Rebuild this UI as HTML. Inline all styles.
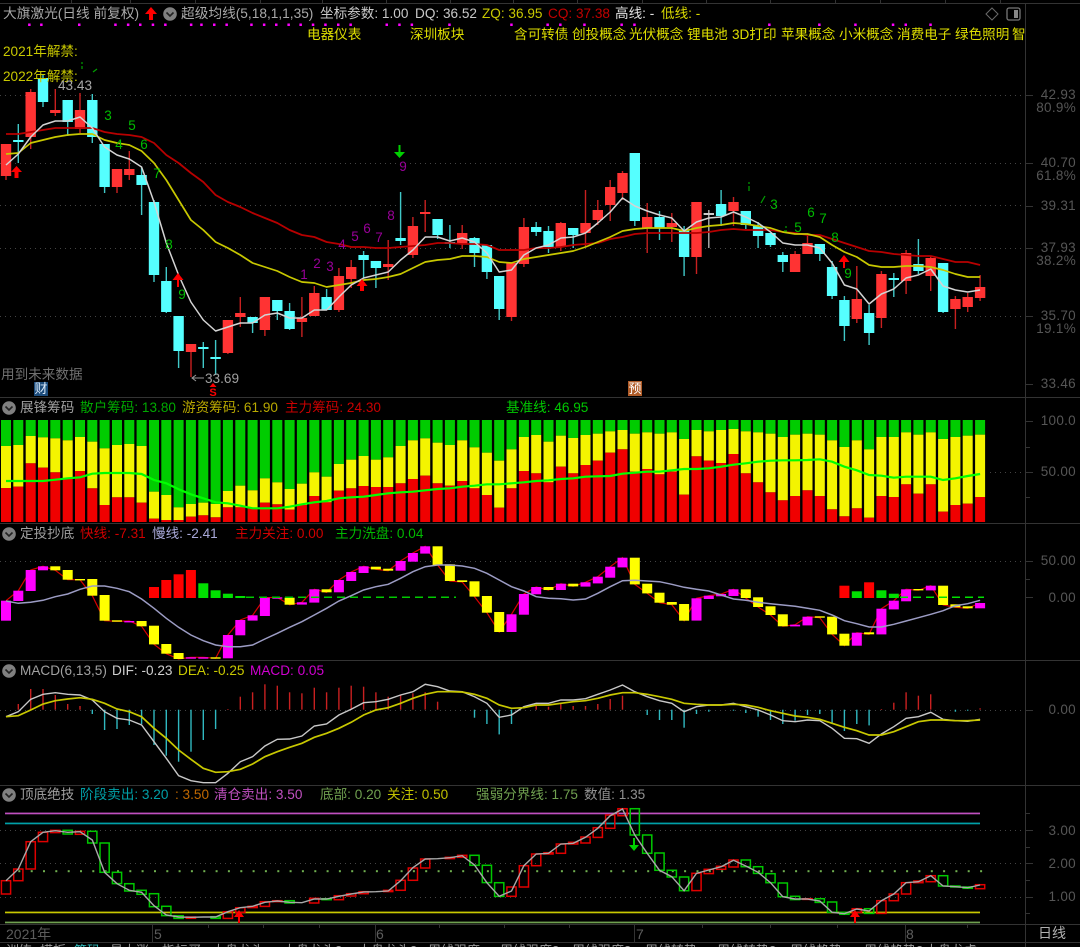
<!DOCTYPE html>
<html lang="zh">
<head>
<meta charset="utf-8">
<title>大旗激光</title>
<style>
html,body{margin:0;padding:0;background:#000;}
#r{position:relative;width:1080px;height:947px;background:#000;overflow:hidden;font-family:"Liberation Sans","Noto Sans CJK SC",sans-serif;font-size:13.6px;line-height:16px;color:#aaa;filter:blur(.3px);}
#r svg{position:absolute;left:0;top:0;}
.t{position:absolute;white-space:nowrap;}
.a{position:absolute;right:4px;white-space:nowrap;color:#565656;font-size:13.5px;letter-spacing:.3px;}
.y{color:#dede00;}
.tab{position:absolute;top:943px;height:4px;overflow:hidden;color:#9a9a9a;font-size:13px;line-height:15px;white-space:nowrap;}
.tab span{position:relative;top:0;display:block;}
</style>
</head>
<body>
<div id="r">
<svg width="1080" height="947" viewBox="0 0 1080 947" xmlns="http://www.w3.org/2000/svg">
  <!-- frame -->
  <g stroke="#333" stroke-width="1" fill="none" shape-rendering="crispEdges">
    <path d="M0 3.5H1080M0 397.5H1080M0 523.5H1080M0 660.5H1080M0 785.5H1080M0 924.5H1080M0 942.5H1080M1025.5 3V947"/>
    <path d="M1025 95.5h8M1025 163.5h8M1025 206.5h8M1025 248.5h8M1025 316.5h8M1025 384.5h8M1025 421.5h8M1025 447.5h5M1025 472.5h8M1025 497.5h5M1025 561.5h8M1025 579.5h5M1025 597.5h8M1025 710.5h8M1025 813.5h5M1025 830.5h8M1025 847.5h5M1025 863.5h8M1025 880.5h5M1025 897.5h8M1025 913.5h5"/>
    <path d="M152.5 924V942M375.5 924V942M634.5 924V942M905.5 924V942M208.5 924v4M263.5 924v4M319.5 924v4M439.5 924v4M504.5 924v4M569.5 924v4M702.5 924v4M770.5 924v4M837.5 924v4M967.5 924v4M71.5 0v3M130.5 0v3M195.5 0v3M260.5 0v3M322.5 0v3M386.5 0v3M450.5 0v3M513.5 0v3M577.5 0v3M642.5 0v3M706.5 0v3M770.5 0v3M835.5 0v3M880.5 0v3M945.5 0v3M1000.5 0v3"/>
  </g>
  <!-- dotted grids -->
  <g stroke="#444" stroke-width="1" stroke-dasharray="1 4" fill="none" shape-rendering="crispEdges">
    <path d="M0 95.5H1022M0 163.5H1022M0 205.5H1022M0 248.5H1022M0 316.5H1022"/>
    <path d="M990 472.5H1022M0 561.5H1022M0 710.5H1022M0 830.5H1022M0 863.5H1022M0 897.5H1022"/>
  </g>
  <g id="mag" fill="#f0f"></g>
  <g id="candles"></g>
  <g id="mas" fill="none" stroke-linejoin="round"></g>
  <g id="chips"></g>
  <g id="p3"></g>
  <g id="p4"></g>
  <g id="p5"></g>

  <!-- numbers on main chart -->
  <g font-family="Liberation Sans, sans-serif" font-size="13.5" fill="#00bb00" text-anchor="middle">
    <text x="108" y="120">3</text><text x="132" y="130">5</text><text x="119" y="149">4</text><text x="144" y="149">6</text><text x="157" y="178">7</text><text x="169" y="249">8</text><text x="182" y="299">9</text>
    <text x="774" y="209">3</text><text x="798" y="232">5</text><text x="811" y="217">6</text><text x="823" y="223">7</text><text x="835" y="242">8</text><text x="848" y="278">9</text>
  </g>
  <g stroke="#00a000" stroke-width="1.2" fill="none">
    <path d="M82 62v2M82 66v3M93 72l4-3M749 182v2M749 186v5M761 203l4-7M786 226v2M784 231h3"/>
  </g>
  <g font-family="Liberation Sans, sans-serif" font-size="13.5" fill="#980098" text-anchor="middle">
    <text x="304" y="279">1</text><text x="317" y="268">2</text><text x="330" y="271">3</text><text x="342" y="249">4</text><text x="355" y="241">5</text><text x="367" y="233">6</text><text x="379" y="242">7</text><text x="391" y="220">8</text><text x="403" y="171">9</text>
  </g>

  <!-- arrows -->
  <g fill="#f00">
    <path transform="translate(16.5,171)" d="M-5.5 1L0-5 5.5 1H2V7H-2V1Z"/>
    <path transform="translate(178,279)" d="M-5.5 1L0-6 5.5 1H1V8H-1V1Z"/>
    <path transform="translate(362,285)" d="M-5.5 1L0-6 5.5 1H2V6H-2V1Z"/>
    <path transform="translate(844,261)" d="M-5.5 1L0-6 5.5 1H1V7H-1V1Z"/>
    <path transform="translate(151,13)" d="M-6 1L0-6 6 1H2V7H-2V1Z"/>
    <path transform="translate(213,386)" d="M-3.5 1L0-3 3.5 1Z"/>
    <path transform="translate(239,916)" d="M-5 1L0-6 5 1H1V7H-1V1Z"/>
    <path transform="translate(855,916)" d="M-5 1L0-6 5 1H1V7H-1V1Z"/>
  </g>
  <g fill="#00d000">
    <path transform="translate(399.5,152)" d="M-5.5 0L0 6 5.5 0H1V-7H-1V0Z"/>
    <path transform="translate(634,845)" d="M-5 0L0 6 5 0H1V-7H-1V0Z"/>
  </g>
  <text x="213" y="396" font-family="Liberation Sans, sans-serif" font-size="11" font-weight="bold" fill="#f00" text-anchor="middle">S</text>
  <path d="M204 378H192M196 375l-4 3 4 3" stroke="#999" fill="none"/>

  <!-- header icons -->
  <g fill="#808080">
    <circle cx="170" cy="14" r="6.8"/><circle cx="9" cy="408" r="6.8"/><circle cx="9" cy="534" r="6.8"/><circle cx="9" cy="671" r="6.8"/><circle cx="9" cy="795" r="6.8"/>
  </g>
  <g stroke="#222" stroke-width="1.6" fill="none">
    <path d="M166.5 12.5l3.5 3.5 3.5-3.5M5.5 406.5l3.5 3.5 3.5-3.5M5.5 532.5l3.5 3.5 3.5-3.5M5.5 669.5l3.5 3.5 3.5-3.5M5.5 793.5l3.5 3.5 3.5-3.5"/>
  </g>
  <path d="M992 8l6 6-6 6-6-6Z" stroke="#6a6a6a" fill="none"/>
  <rect x="1007" y="8" width="13" height="12" rx="2" stroke="#777" fill="none" stroke-width="1.3"/>
  <rect x="1014" y="10" width="4" height="8" fill="#888"/>
</svg>

<!-- top row -->
<div class="t" style="left:3px;top:6px;color:#a8a8a8;font-size:13.7px">大旗激光(日线 前复权)</div>
<div class="t" style="left:181px;top:6px;color:#a8a8a8;font-size:13.7px">超级均线(5,18,1,1,35)</div>
<div class="t" style="left:320px;top:6px;color:#c8c8c8">坐标参数: 1.00</div>
<div class="t" style="left:415px;top:6px;color:#c8c8c8">DQ: 36.52</div>
<div class="t" style="left:482px;top:6px;color:#c8c800">ZQ: 36.95</div>
<div class="t" style="left:548px;top:6px;color:#c00000">CQ: 37.38</div>
<div class="t" style="left:615px;top:6px;color:#e0e0e0">高线: -</div>
<div class="t" style="left:661px;top:6px;color:#d8d800">低线: -</div>

<!-- concept row -->
<div class="t y" style="left:307px;top:27px">电器仪表</div>
<div class="t y" style="left:410px;top:27px">深圳板块</div>
<div class="t y" style="left:514px;top:27px">含可转债</div>
<div class="t y" style="left:572px;top:27px">创投概念</div>
<div class="t y" style="left:629px;top:27px">光伏概念</div>
<div class="t y" style="left:687px;top:27px">锂电池</div>
<div class="t y" style="left:732px;top:27px">3D打印</div>
<div class="t y" style="left:781px;top:27px">苹果概念</div>
<div class="t y" style="left:839px;top:27px">小米概念</div>
<div class="t y" style="left:897px;top:27px">消费电子</div>
<div class="t y" style="left:955px;top:27px">绿色照明</div>
<div class="t y" style="left:1012px;top:27px;width:13px;overflow:hidden">智</div>

<div class="t" style="left:3px;top:44px;color:#c8c800">2021年解禁:</div>
<div class="t" style="left:3px;top:69px;color:#c8c800">2022年解禁:</div>
<div class="t" style="left:58px;top:78px;color:#a8a8a8">43.43</div>
<div class="t" style="left:205px;top:371px;color:#a0a0a0">33.69</div>
<div class="t" style="left:1px;top:367px;color:#707070">用到未来数据</div>
<div class="t" style="left:34px;top:382px;width:14px;height:14px;line-height:14px;background:#1c4c7c;color:#d8e8f8;text-align:center;font-size:13px">财</div>
<div class="t" style="left:628px;top:381px;width:14px;height:15px;line-height:15px;background:#b05c28;color:#fff;text-align:center;font-size:13px">预</div>

<!-- panel 2 header -->
<div class="t" style="left:20px;top:400px;color:#a0a0a0">展锋筹码</div>
<div class="t" style="left:80px;top:400px;color:#00a800">散户筹码: 13.80</div>
<div class="t" style="left:182px;top:400px;color:#b8a800">游资筹码: 61.90</div>
<div class="t" style="left:285px;top:400px;color:#c80000">主力筹码: 24.30</div>
<div class="t" style="left:506px;top:400px;color:#00c800">基准线: 46.95</div>

<!-- panel 3 header -->
<div class="t" style="left:20px;top:526px;color:#a0a0a0">定投抄底</div>
<div class="t" style="left:80px;top:526px;color:#d00000">快线: -7.31</div>
<div class="t" style="left:152px;top:526px;color:#a8a8d8">慢线: -2.41</div>
<div class="t" style="left:235px;top:526px;color:#d00000">主力关注: 0.00</div>
<div class="t" style="left:335px;top:526px;color:#00b800">主力洗盘: 0.04</div>

<!-- panel 4 header -->
<div class="t" style="left:20px;top:663px;color:#a0a0a0">MACD(6,13,5)</div>
<div class="t" style="left:112px;top:663px;color:#d0d0d0">DIF: -0.23</div>
<div class="t" style="left:178px;top:663px;color:#c8c800">DEA: -0.25</div>
<div class="t" style="left:250px;top:663px;color:#d000d0">MACD: 0.05</div>

<!-- panel 5 header -->
<div class="t" style="left:20px;top:787px;color:#a0a0a0">顶底绝技</div>
<div class="t" style="left:80px;top:787px;color:#00a0a8">阶段卖出: 3.20</div>
<div class="t" style="left:175px;top:787px;color:#c06800">: 3.50</div>
<div class="t" style="left:214px;top:787px;color:#c050c0">清仓卖出: 3.50</div>
<div class="t" style="left:320px;top:787px;color:#70a050">底部: 0.20</div>
<div class="t" style="left:387px;top:787px;color:#c0c000">关注: 0.50</div>
<div class="t" style="left:476px;top:787px;color:#70a050">强弱分界线: 1.75</div>
<div class="t" style="left:584px;top:787px;color:#909090">数值: 1.35</div>

<!-- axis labels -->
<div class="a" style="top:87px">42.93</div>
<div class="a" style="top:100px">80.9%</div>
<div class="a" style="top:155px">40.70</div>
<div class="a" style="top:168px">61.8%</div>
<div class="a" style="top:198px">39.31</div>
<div class="a" style="top:240px">37.93</div>
<div class="a" style="top:253px">38.2%</div>
<div class="a" style="top:308px">35.70</div>
<div class="a" style="top:321px">19.1%</div>
<div class="a" style="top:376px">33.46</div>
<div class="a" style="top:413px">100.0</div>
<div class="a" style="top:464px">50.00</div>
<div class="a" style="top:553px">50.00</div>
<div class="a" style="top:590px">0.00</div>
<div class="a" style="top:702px">0.00</div>
<div class="a" style="top:823px">3.00</div>
<div class="a" style="top:856px">2.00</div>
<div class="a" style="top:889px">1.00</div>

<!-- date axis -->
<div class="t" style="left:6px;top:926px;color:#5c5c5c;font-size:14px">2021年</div>
<div class="t" style="left:154px;top:926px;color:#5c5c5c;font-size:14px">5</div>
<div class="t" style="left:376px;top:926px;color:#5c5c5c;font-size:14px">6</div>
<div class="t" style="left:636px;top:926px;color:#5c5c5c;font-size:14px">7</div>
<div class="t" style="left:906px;top:926px;color:#5c5c5c;font-size:14px">8</div>
<div class="t" style="left:1038px;top:925px;color:#b0b0b0;font-size:14px">日线</div>

<!-- clipped tab strip -->
<div class="tab" style="left:6px"><span>训练</span></div>
<div class="tab" style="left:40px"><span>模板</span></div>
<div class="tab" style="left:74px;color:#30c0c0"><span>筹码</span></div>
<div class="tab" style="left:110px"><span>最大涨</span></div>
<div class="tab" style="left:162px"><span>指标买</span></div>
<div class="tab" style="left:212px"><span>大盘龙头</span></div>
<div class="tab" style="left:283px"><span>大盘龙头2</span></div>
<div class="tab" style="left:358px"><span>大盘龙头3</span></div>
<div class="tab" style="left:428px"><span>周线强度</span></div>
<div class="tab" style="left:500px"><span>周线强度2</span></div>
<div class="tab" style="left:572px"><span>周线强度3</span></div>
<div class="tab" style="left:645px"><span>周线转势</span></div>
<div class="tab" style="left:717px"><span>周线转势2</span></div>
<div class="tab" style="left:790px"><span>周线趋势</span></div>
<div class="tab" style="left:864px"><span>周线趋势2</span></div>
<div class="tab" style="left:925px"><span>大盘龙虎</span></div>

<script>
(function(){
var NS="http://www.w3.org/2000/svg";
function X(i){return 6+12.33*i;}
function el(par,tag,attrs){var e=document.createElementNS(NS,tag);for(var k in attrs)e.setAttribute(k,attrs[k]);par.appendChild(e);return e;}
function $(id){return document.getElementById(id);}
function pts(arr,off,div){return arr.map(function(v,i){return X(i).toFixed(1)+","+(off+v/(div||1)).toFixed(1);}).join(" ");}

/* magenta dots */
[85,120,230,335,372,407,444,480,555,585,622,658,730,767,802,838,873,909,945,982,1018,1123,1160,1196,1305,1485].forEach(function(z){el($("mag"),"rect",{x:(z/2.904-1.2).toFixed(1),y:23.5,width:2.5,height:2.5});});
[22,59,129,237,274,666,811,916,1025,1062,1134].forEach(function(z){el($("mag"),"rect",{x:(540+z/2.904-1.2).toFixed(1),y:23.5,width:2.5,height:2.5});});

/* candles: type, top, bottom, wickTop, wickBottom */
var C=[
"r",144,176,144,180,"c",140,142,124,163,"r",92,137,89,149,"c",78,102,75,107,"r",110,113,89,116,
"c",100,122,100,136,"r",110,129,93,133,"c",100,137,94,143,"c",144,187,144,193,"r",169,187,169,193,
"r",169,175,151,180,"c",175,185,167,215,"c",202,275,200,282,"c",281,312,267,313,"c",316,351,316,368,
"r",344,352,344,377,"c",347,349,342,368,"c",357,359,340,375,"r",320,353,320,354,"r",313,317,297,327,
"c",317,323,317,333,"r",297,330,297,336,"c",300,311,300,320,"c",311,329,303,330,"r",318,322,297,337,
"r",293,316,286,316,"c",297,310,289,310,"r",276,310,268,312,"r",267,279,260,288,"c",255,260,251,278,
"c",261,268,261,288,"r",264,267,240,280,"c",238,241,192,245,"r",226,255,217,258,"r",212,214,200,232,
"c",219,235,219,239,"c",242,244,225,248,"r",233,244,225,249,"c",238,253,237,267,"c",245,272,245,279,
"c",276,309,276,320,"r",263,317,263,321,"r",227,264,218,267,"c",227,232,222,236,"c",231,247,226,253,
"r",223,247,222,251,"c",228,235,228,248,"r",223,233,190,247,"r",210,220,200,225,"r",187,205,180,221,
"r",173,193,171,200,"c",153,221,153,226,"r",217,228,203,253,"c",217,228,211,240,"r",223,227,213,242,
"c",230,257,226,276,"r",202,257,202,274,"g",213,215,210,248,"c",204,216,190,226,"r",202,211,197,226,
"c",211,225,211,229,"c",226,236,222,248,"c",233,245,233,247,"c",255,262,252,272,"r",254,272,251,272,
"r",243,254,234,254,"c",244,254,244,261,"c",267,296,261,299,"c",300,326,296,341,"r",299,319,266,323,
"c",313,333,305,345,"r",274,318,271,328,"c",278,280,273,297,"r",253,281,250,294,"c",264,271,239,274,
"r",258,276,256,291,"c",263,312,263,313,"r",299,309,296,329,"r",297,307,293,312,"r",287,298,275,301
];
var g=$("candles");
for(var n=0;n<80;n++){
  var j=n*5,t=C[j],x=X(n);
  var body={r:"#ff3333",c:"#55ffff",g:"#cccccc"}[t],wick={r:"#c82020",c:"#40c8c8",g:"#b0b0b0"}[t];
  el(g,"rect",{x:(x-.7).toFixed(1),y:C[j+3],width:1.4,height:C[j+4]-C[j+3],fill:wick});
  el(g,"rect",{x:(x-5.2).toFixed(1),y:C[j+1],width:10.4,height:Math.max(C[j+2]-C[j+1],2),fill:body});
}

/* moving averages */
var m5=[165,154,137,125,121,121,117,128,147,155,159,167,202,243,275,302,320,331,327,323,323,315,313,318,318,310,310,297,285,278,275,272,260,250,237,237,241,238,242,253,272,270,255,248,245,238,237,233,223,212,198,206,211,215,218,231,222,218,217,212,217,223,232,243,245,245,248,263,285,289,304,294,289,278,275,269,286,290,292,290];
var m18=[154,153,143,140,137,135,134,134,140,143,145,151,163,180,200,220,230,242,248,255,263,267,271,277,282,283,287,285,283,280,279,277,274,268,262,260,259,256,256,257,262,263,259,257,255,253,251,247,242,237,231,229,228,228,228,231,228,226,225,223,224,226,228,232,234,234,237,245,252,257,265,267,267,266,266,267,270,274,277,277];
var m35=[134,134,132,130,128,128,128,128,132,134,135,137,143,155,163,173,182,195,202,207,213,218,223,230,235,237,242,244,247,247,248,248,247,246,245,243,243,244,244,245,250,250,250,248,248,247,245,244,243,239,237,234,233,233,233,233,233,232,230,229,230,230,230,232,233,235,235,239,243,247,251,252,254,255,256,256,259,262,262,265];
var M=$("mas");
el(M,"polyline",{points:pts(m35,0),stroke:"#b80000","stroke-width":1.8});
el(M,"polyline",{points:pts(m18,0),stroke:"#c8c800","stroke-width":1.7});
el(M,"polyline",{points:pts(m5,0),stroke:"#d4d4d4","stroke-width":1.5});

/* chips panel */
var cg=[153,150,123,127,130,136,126,140,160,150,147,153,290,300,337,327,323,327,288,272,286,250,262,282,266,232,245,207,194,183,194,187,153,136,130,143,150,136,157,173,197,163,126,120,140,122,129,120,116,109,105,116,112,116,112,132,105,109,105,102,109,112,116,126,119,116,119,136,156,136,163,126,126,112,119,112,132,126,122,119];
var cy=[279,275,205,218,232,252,228,280,330,307,307,323,371,375,375,365,361,367,337,337,341,323,328,344,330,303,322,287,280,273,276,276,265,252,242,265,272,258,280,300,338,280,228,235,262,215,235,210,197,173,163,230,222,238,230,299,184,197,204,177,235,262,292,316,303,286,303,343,364,340,368,303,306,268,296,268,350,330,326,306];
var cl=[258,258,258,258,254,250,247,236,234,234,234,237,255,265,283,298,310,322,325,332,340,340,340,335,328,322,318,310,307,305,300,295,292,290,286,282,280,275,272,268,268,265,262,258,256,252,250,245,244,243,236,233,230,230,226,222,222,220,215,209,205,200,197,196,196,195,193,200,215,226,240,242,248,245,245,245,255,250,243,237];
var P=$("chips");
for(var i=0;i<80;i++){
  var x0=(X(i)-5).toFixed(1),a=395+cg[i]/3,b=395+cy[i]/3;
  el(P,"rect",{x:x0,y:420,width:10,height:a-420,fill:"#00cc00"});
  el(P,"rect",{x:x0,y:a,width:10,height:b-a,fill:"#f4f400"});
  el(P,"rect",{x:x0,y:b,width:10,height:522-b,fill:"#f00000"});
}
el(P,"polyline",{points:pts(cl,395,3),fill:"none",stroke:"#00ff00","stroke-width":2.2});

/* panel 3 */
var B3=["m",227,287,"m",197,228,"m",135,198,"m",124,136,"y",124,136,"y",135,164,"y",162,164,"y",162,212,"y",210,287,"y",286,289,
"m",288,290,"y",288,304,"y",302,358,"y",357,386,"y",384,402,"m",397,401,"m",397,400,"y",397,400,"m",330,400,"m",285,331,
"m",271,287,"m",218,273,"m",217,220,"y",218,239,"m",232,239,"m",193,233,"y",193,202,"m",165,202,"m",141,168,"m",124,144,
"y",125,133,"y",131,137,"m",108,137,"m",84,110,"m",64,86,"y",64,120,"y",118,168,"y",166,171,"y",169,215,"y",213,263,
"y",261,321,"m",268,321,"m",207,269,"m",186,208,"y",186,195,"m",176,195,"y",176,184,"m",172,185,"m",155,175,"m",125,158,
"m",98,127,"y",98,178,"y",176,205,"y",203,233,"y",231,239,"y",237,287,"m",220,287,"m",212,222,"m",207,214,"m",193,213,
"y",193,219,"y",217,246,"y",244,270,"y",268,304,"m",299,304,"m",275,301,"y",274,278,"y",275,328,"y",326,362,"m",323,362,
"y",322,328,"m",251,328,"m",227,253,"m",193,229,"y",192,196,"m",182,196,"y",182,240,"y",238,247,"y",244,250,"m",234,250];
var S=$("p3"),zig=[];
for(var i=0;i<80;i++){
  var t=B3[i*3],a=B3[i*3+1],b=B3[i*3+2];
  zig.push(X(i).toFixed(1)+","+(525+(t=="m"?a:b)/3).toFixed(1));
}
el(S,"polyline",{points:zig.join(" "),fill:"none",stroke:"#d80000","stroke-width":1.2});
for(var i=0;i<80;i++){
  var t=B3[i*3],a=525+B3[i*3+1]/3,b=525+B3[i*3+2]/3;
  el(S,"rect",{x:(X(i)-5).toFixed(1),y:a.toFixed(1),width:10,height:Math.max(b-a,1.4).toFixed(1),fill:t=="m"?"#ff00ff":"#ffff00"});
}
[[12,186,"#f00"],[13,165,"#f00"],[14,148,"#f00"],[15,135,"#f00"],[16,175,"#00e000"],[17,196,"#00e000"],[18,206,"#00e000"],[19,213,"#00e000"],[68,182,"#f00"],[69,199,"#00e000"],[70,172,"#f00"],[71,196,"#00e000"],[72,206,"#00e000"]].forEach(function(h){
  var top=525+h[1]/3;
  el(S,"rect",{x:(X(h[0])-5).toFixed(1),y:top.toFixed(1),width:10,height:(598-top).toFixed(1),fill:h[2]});
});
el(S,"path",{d:"M246 597.3H456",stroke:"#00c800","stroke-width":1.5,"stroke-dasharray":"8 5",fill:"none"});
el(S,"path",{d:"M900 597.3H984",stroke:"#00e000","stroke-width":1.5,"stroke-dasharray":"8 5",fill:"none"});
var slow=[228,235,232,226,215,207,193,183,183,190,200,222,250,280,307,330,347,360,365,365,360,342,325,307,290,270,250,228,212,195,185,178,160,140,125,120,120,123,130,145,165,185,198,215,220,221,225,222,205,185,167,166,168,170,178,187,193,198,210,222,226,232,236,240,244,250,256,270,287,296,306,306,298,288,278,268,257,242,236,226];
el(S,"polyline",{points:pts(slow,525,3),fill:"none",stroke:"#9c9cc4","stroke-width":1.5});

/* MACD */
var H={1:132,2:87,3:87,4:105,5:132,6:138,7:162,8:210,9:207,10:195,11:192,12:255,13:287,14:305,15:275,16:240,17:207,18:147,19:110,20:97,21:73,22:77,23:97,24:100,25:83,26:97,27:83,28:77,29:80,30:97,31:110,32:105,33:100,34:97,35:125,38:173,39:192,40:223,41:192,43:137,44:140,45:130,46:138,47:138,48:132,49:117,50:107,52:165,53:180,54:180,55:203,56:162,57:155,59:152,60:159,61:170,62:180,63:192,64:182,65:165,66:162,67:190,68:213,69:192,70:196,71:147,72:128,73:97,74:107,75:103,77:155,78:152,79:145};
var Q=$("p4");
Object.keys(H).forEach(function(k){
  var z=H[k],up=z<149,y1=660+Math.min(z,149)/3,y2=660+Math.max(z,149)/3;
  el(Q,"rect",{x:(X(+k)-.7).toFixed(1),y:y1.toFixed(1),width:1.4,height:(y2-y1).toFixed(1),fill:up?"#c82020":"#30b8c0"});
});
var dif=[170,155,118,103,98,103,105,120,155,175,180,195,245,295,347,362,368,368,340,305,290,258,238,237,228,198,192,165,148,128,125,118,105,95,73,80,93,95,110,130,172,165,140,130,130,120,120,116,103,90,75,95,110,122,130,155,140,135,135,130,140,150,165,182,185,180,182,205,235,236,250,222,200,175,170,157,178,182,184,178];
var dea=[170,167,150,132,122,117,113,118,130,147,155,170,205,235,270,298,325,337,335,328,312,290,275,262,250,232,220,205,187,165,150,143,130,115,103,95,95,96,103,115,135,145,143,135,135,130,125,122,115,105,98,98,103,110,118,130,133,135,135,133,135,142,152,160,168,172,178,190,202,212,225,225,215,200,185,180,180,182,182,180];
el(Q,"polyline",{points:pts(dif,660,3),fill:"none",stroke:"#c8c8c8","stroke-width":1.4});
el(Q,"polyline",{points:pts(dea,660,3),fill:"none",stroke:"#c8c800","stroke-width":1.7});

/* panel 5 */
var T=$("p5");
[[813.5,"#c050c0"],[823.5,"#00a0a8"],[912.5,"#c8c800"],[922.5,"#70a050"]].forEach(function(l){
  el(T,"rect",{x:5,y:l[0]-.9,width:975,height:1.7,fill:l[1]});
});
for(var i=1;i<80;i++){el(T,"rect",{x:X(i).toFixed(1),y:870.2,width:2,height:2,fill:"#70b050"});}
var B5=["r",287,327,"r",252,287,"r",170,252,"r",142,170,"r",136,143,"g",136,147,"r",139,148,"g",139,174,"g",174,262,"g",262,296,
"g",296,318,"g",316,328,"g",326,365,"g",364,392,"g",392,400,"r",396,400,"n",396,397,"g",395,400,"r",380,400,"r",368,382,
"r",364,368,"r",350,364,"r",347,350,"g",347,354,"n",353,354,"r",340,354,"g",341,344,"r",332,344,"r",326,333,"r",320,326,
"n",320,321,"r",316,320,"r",286,316,"r",249,286,"r",222,249,"n",221,222,"r",217,221,"r",211,217,"g",211,241,"g",241,293,
"g",293,334,"r",306,334,"r",242,306,"r",207,242,"r",203,207,"r",177,205,"r",172,177,"r",156,174,"r",128,157,"r",90,130,
"r",71,92,"g",71,150,"g",150,205,"g",204,256,"g",256,276,"g",276,317,"r",265,317,"r",253,266,"r",244,253,"r",225,246,
"g",225,245,"g",245,265,"g",266,293,"g",294,335,"g",334,344,"r",341,343,"g",341,352,"g",351,382,"g",382,388,"r",371,382,
"g",371,385,"r",347,385,"r",327,347,"r",293,327,"r",288,293,"r",272,290,"g",272,303,"g",303,306,"g",306,310,"r",299,311];
for(var i=0;i<80;i++){
  var t=B5[i*3],a=785+B5[i*3+1]/3,b=785+B5[i*3+2]/3;
  if(t=="n")continue;
  el(T,"rect",{x:(X(i)-4.6).toFixed(1),y:a.toFixed(1),width:9.2,height:(b-a).toFixed(1),fill:"none",stroke:t=="r"?"#e00000":"#00c800","stroke-width":1.5});
}
var v5=[287,252,170,142,137,142,140,165,262,296,316,322,362,390,396,397,396,396,380,368,364,352,348,352,353,342,342,334,327,321,320,318,287,248,222,221,218,212,240,293,334,318,242,207,205,177,175,157,130,92,72,150,205,256,275,317,265,255,245,226,243,262,293,335,342,342,348,382,386,372,378,347,327,293,290,272,303,305,308,300];
el(T,"polyline",{points:pts(v5,785,3),fill:"none",stroke:"#a8a8a8","stroke-width":1.4});
})();
</script>
</div>
</body>
</html>
